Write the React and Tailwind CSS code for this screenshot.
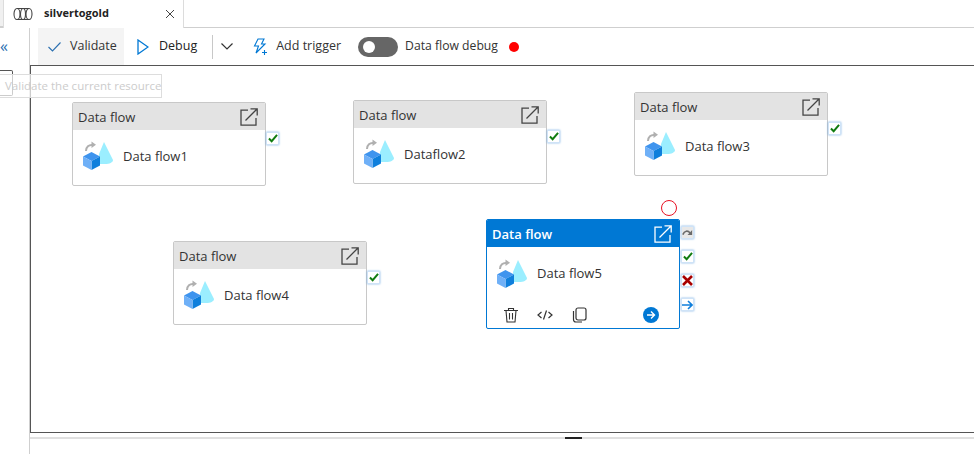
import React from "react";

const FONT = { fontFamily: '"Open Sans", "Noto Sans", sans-serif' };

function PipelineIcon() {
  return (
    <svg width="20" height="14" viewBox="0 0 20 14" fill="none" stroke="#444" strokeWidth="1.100">
      <path d="M4 1.500h12M4 12.500h12" />
      <ellipse cx="4" cy="7" rx="3" ry="5.500" />
      <ellipse cx="10" cy="7" rx="2.500" ry="5.500" />
      <ellipse cx="16" cy="7" rx="3" ry="5.500" />
    </svg>
  );
}

function ExternalIcon() {
  return (
    <svg width="18" height="18" viewBox="0 0 18 18" fill="none" stroke="currentColor" strokeWidth="1.300">
      <path d="M8 2.200H1v15h15V10" />
      <path d="M5.500 12.500L17 1M10.500 0.800H17.200V7.500" />
    </svg>
  );
}

function DataFlowIcon() {
  return (
    <svg className="shrink-0" width="31" height="31" viewBox="0 0 31 31">
      <path d="M21 2L30 20c0 2.500-3.500 4-8 4h-6V14z" fill="#9beeff" />
      <path d="M3 11c0-4 3-6.500 6.500-6" fill="none" stroke="#b0b0b0" strokeWidth="2" />
      <path d="M8.500 1.500l4.500 3.300-4.500 3.300z" fill="#b0b0b0" />
      <path d="M8.500 12L17 16.500 8.500 21 0 16.500z" fill="#3f94ee" />
      <path d="M8.500 21L17 16.500V25.500L8.500 30z" fill="#0f7fdc" />
      <path d="M0 16.500L8.500 21V30L0 25.500z" fill="#6fb0f7" />
    </svg>
  );
}

function Badge({ children, className = "" }) {
  return (
    <div className={`flex h-[13px] w-[13px] items-center justify-center border border-[#cfe3f7] shadow-[0_0_2px_#7fb2e5] ${className}`}>
      {children}
    </div>
  );
}

function Check() {
  return (
    <svg width="10" height="9" viewBox="0 0 11 10" fill="none" stroke="#107c10" strokeWidth="2.200">
      <path d="M1 5l3 3 6-7" />
    </svg>
  );
}

function Cross() {
  return (
    <svg width="11" height="11" viewBox="0 0 11 11" fill="none" stroke="#a80000" strokeWidth="2.600">
      <path d="M1 1l9 9M10 1l-9 9" />
    </svg>
  );
}

function Skip() {
  return (
    <svg width="13" height="11" viewBox="0 0 13 11" fill="none" stroke="#6b6b6b" strokeWidth="2">
      <path d="M1 8c2-5 6-5 8.500-2" />
      <path d="M12 2.500v6H6.500z" fill="#6b6b6b" stroke="none" />
    </svg>
  );
}

function ArrowRight() {
  return (
    <svg width="11" height="10" viewBox="0 0 11 10" fill="none" stroke="#0f7fdc" strokeWidth="1.600">
      <path d="M0 5h9.500M6 1l4 4-4 4" />
    </svg>
  );
}

function Node({ name, left, top }) {
  return (
    <div className="absolute" style={{ left, top }}>
      <div className="h-[84px] w-[194px] overflow-hidden rounded-[2px] border border-[#c8c8c8] bg-white">
        <div className="flex h-[27px] items-center justify-between bg-[#e3e3e3] pl-[5px] pr-[7px] text-[13px] text-[#333]">
          <span className="mt-[2px]">Data flow</span>
          <span className="text-[#444]"><ExternalIcon /></span>
        </div>
        <div className="flex items-center pl-[10px] pt-[10px] text-[13px] text-[#333]">
          <DataFlowIcon />
          <span className="ml-[9px] mt-[2px]">{name}</span>
        </div>
      </div>
      <Badge className="absolute left-[194px] top-[30px] bg-white"><Check /></Badge>
    </div>
  );
}

function SelectedNode() {
  return (
    <div className="absolute left-[455px] top-[153px]">
      <div className="absolute left-[175px] top-[-19px] h-[16px] w-[16px] rounded-full border border-[#e81123]" />
      <div className="h-[110px] w-[194px] overflow-hidden rounded-[2px] border border-[#0078d4] bg-white">
        <div className="flex h-[27px] items-center justify-between bg-[#0078d4] pl-[5px] pr-[7px] text-[13px] text-white">
          <span className="mt-[2px] font-semibold">Data flow</span>
          <ExternalIcon />
        </div>
        <div className="flex items-center pl-[10px] pt-[11px] text-[13px] text-[#333]">
          <DataFlowIcon />
          <span className="ml-[9px]">Data flow5</span>
        </div>
        <div className="mt-[18px] flex items-center pl-[16px] text-[#333]">
          <svg width="16" height="16" viewBox="0 0 16 16" fill="none" stroke="currentColor" strokeWidth="1.100">
            <path d="M1 3.500h14M5.500 3.500V1.500h5v2M3 3.500l1 11.500h8l1-11.500M6.500 6v6.500M9.500 6v6.500" />
          </svg>
          <svg className="ml-[18px]" width="16" height="12" viewBox="0 0 16 12" fill="none" stroke="currentColor" strokeWidth="1.200">
            <path d="M4.500 3L1 6l3.500 3M11.500 3L15 6l-3.500 3M9.500 1.500l-3 9" />
          </svg>
          <svg className="ml-[19px]" width="15" height="16" viewBox="0 0 15 16" fill="none" stroke="currentColor" strokeWidth="1.200">
            <rect x="4" y="1" width="10" height="12" rx="2" />
            <path d="M1.500 4v8.500c0 1.500 1 2.500 2.500 2.500h6" />
          </svg>
          <div className="ml-[56px] flex h-[16px] w-[16px] items-center justify-center rounded-full bg-[#0078d4]">
            <svg width="10" height="10" viewBox="0 0 10 10" fill="none" stroke="#fff" strokeWidth="1.400">
              <path d="M1 5h7.500M5 1.500L8.500 5 5 8.500" />
            </svg>
          </div>
        </div>
      </div>
      <div className="absolute left-[195px] top-[7px] flex flex-col gap-[11px]">
        <Badge className="bg-[#e8e8e8]"><Skip /></Badge>
        <Badge className="bg-white"><Check /></Badge>
        <Badge className="bg-white"><Cross /></Badge>
        <Badge className="bg-white"><ArrowRight /></Badge>
      </div>
    </div>
  );
}

export default function App() {
  return (
    <div className="relative flex h-[454px] w-[974px] flex-col overflow-hidden bg-white text-[#333]" style={FONT}>
      <div className="flex h-[28px] shrink-0 border-b border-[#cfcfcf]">
        <div className="w-[3px] border-b border-[#cfcfcf] bg-[#f0f0f0]" />
        <div className="-mb-px flex h-[28px] w-[181px] items-center border-x border-[#dcdcdc] bg-white pl-[9px] pr-[8px]">
          <PipelineIcon />
          <span className="mb-[2px] ml-[11px] text-[11px] font-bold text-[#222]">silvertogold</span>
          <svg className="ml-auto" width="10" height="10" viewBox="0 0 10 10" fill="none" stroke="#444" strokeWidth="1">
            <path d="M1 1l8 8M9 1l-8 8" />
          </svg>
        </div>
      </div>

      <div className="flex min-h-0 flex-1">
        <div className="w-[30px] shrink-0 border-r border-[#cfcfcf] pt-[8px] text-[16px] leading-[20px] text-[#2a6fb0]">
          <span className="block">«</span>
        </div>
        <div className="flex min-w-0 flex-1 flex-col">
          <div className="flex h-[37px] shrink-0 items-center text-[12.500px] text-[#333]">
            <div className="ml-[8px] flex h-full w-[86px] items-center bg-[#f4f4f4] pl-[10px]">
              <svg width="13" height="10" viewBox="0 0 13 10" fill="none" stroke="#2a6fb0" strokeWidth="1.100">
                <path d="M0.500 5l4 4L12.500 0.500" />
              </svg>
              <span className="ml-[9px]">Validate</span>
            </div>
            <svg className="ml-[13px]" width="12" height="16" viewBox="0 0 12 16" fill="none" stroke="#0078d4" strokeWidth="1.300">
              <path d="M1 1l10 7-10 7z" />
            </svg>
            <span className="ml-[10px] text-[#222]">Debug</span>
            <div className="ml-[15px] h-[24px] w-px bg-[#c8c8c8]" />
            <svg className="ml-[8px]" width="12" height="7" viewBox="0 0 12 7" fill="none" stroke="#333" strokeWidth="1.200">
              <path d="M0.500 0.500L6 6l5.500-5.500" />
            </svg>
            <svg className="ml-[19px]" width="17" height="18" viewBox="0 0 17 18" fill="none" stroke="#0078d4" strokeWidth="1.100">
              <path d="M6 1h6L9.500 6H13L4 15l2.500-7H2.500zM12.500 12v5M10 14.500h5" />
            </svg>
            <span className="ml-[7px]">Add trigger</span>
            <div className="ml-[17px] flex h-[20px] w-[40px] shrink-0 items-center rounded-full bg-[#666] pl-[5px]">
              <div className="h-[12px] w-[12px] rounded-full bg-white" />
            </div>
            <span className="ml-[7px] text-[12.200px]">Data flow debug</span>
            <div className="ml-[11px] h-[10px] w-[10px] rounded-full bg-[#ff0000]" />
          </div>
          <div className="relative h-[368px] shrink-0 border border-r-0 border-[#555]">
            <Node name="Data flow1" left={41} top={36} />
            <Node name="Dataflow2" left={322} top={34} />
            <Node name="Data flow3" left={603} top={26} />
            <Node name="Data flow4" left={142} top={175} />
            <SelectedNode />
          </div>
          <div className="relative mt-[4px] h-[2px] shrink-0 bg-[#e0e0e0]">
            <div className="absolute left-[535px] top-0 h-[2px] w-[17px] bg-[#222]" />
          </div>
        </div>
      </div>

      <div className="absolute left-0 top-[70px] h-[26px] w-[13px] rounded-r-[2px] border border-l-0 border-[#555] bg-white" />
      <div className="absolute left-0 top-[74px] flex h-[24px] w-[162px] items-center whitespace-nowrap border border-l-0 border-[#ddd] bg-white/70 pl-[5px] text-[11.500px] text-[#ccc]">
        Validate the current resource
      </div>
    </div>
  );
}
